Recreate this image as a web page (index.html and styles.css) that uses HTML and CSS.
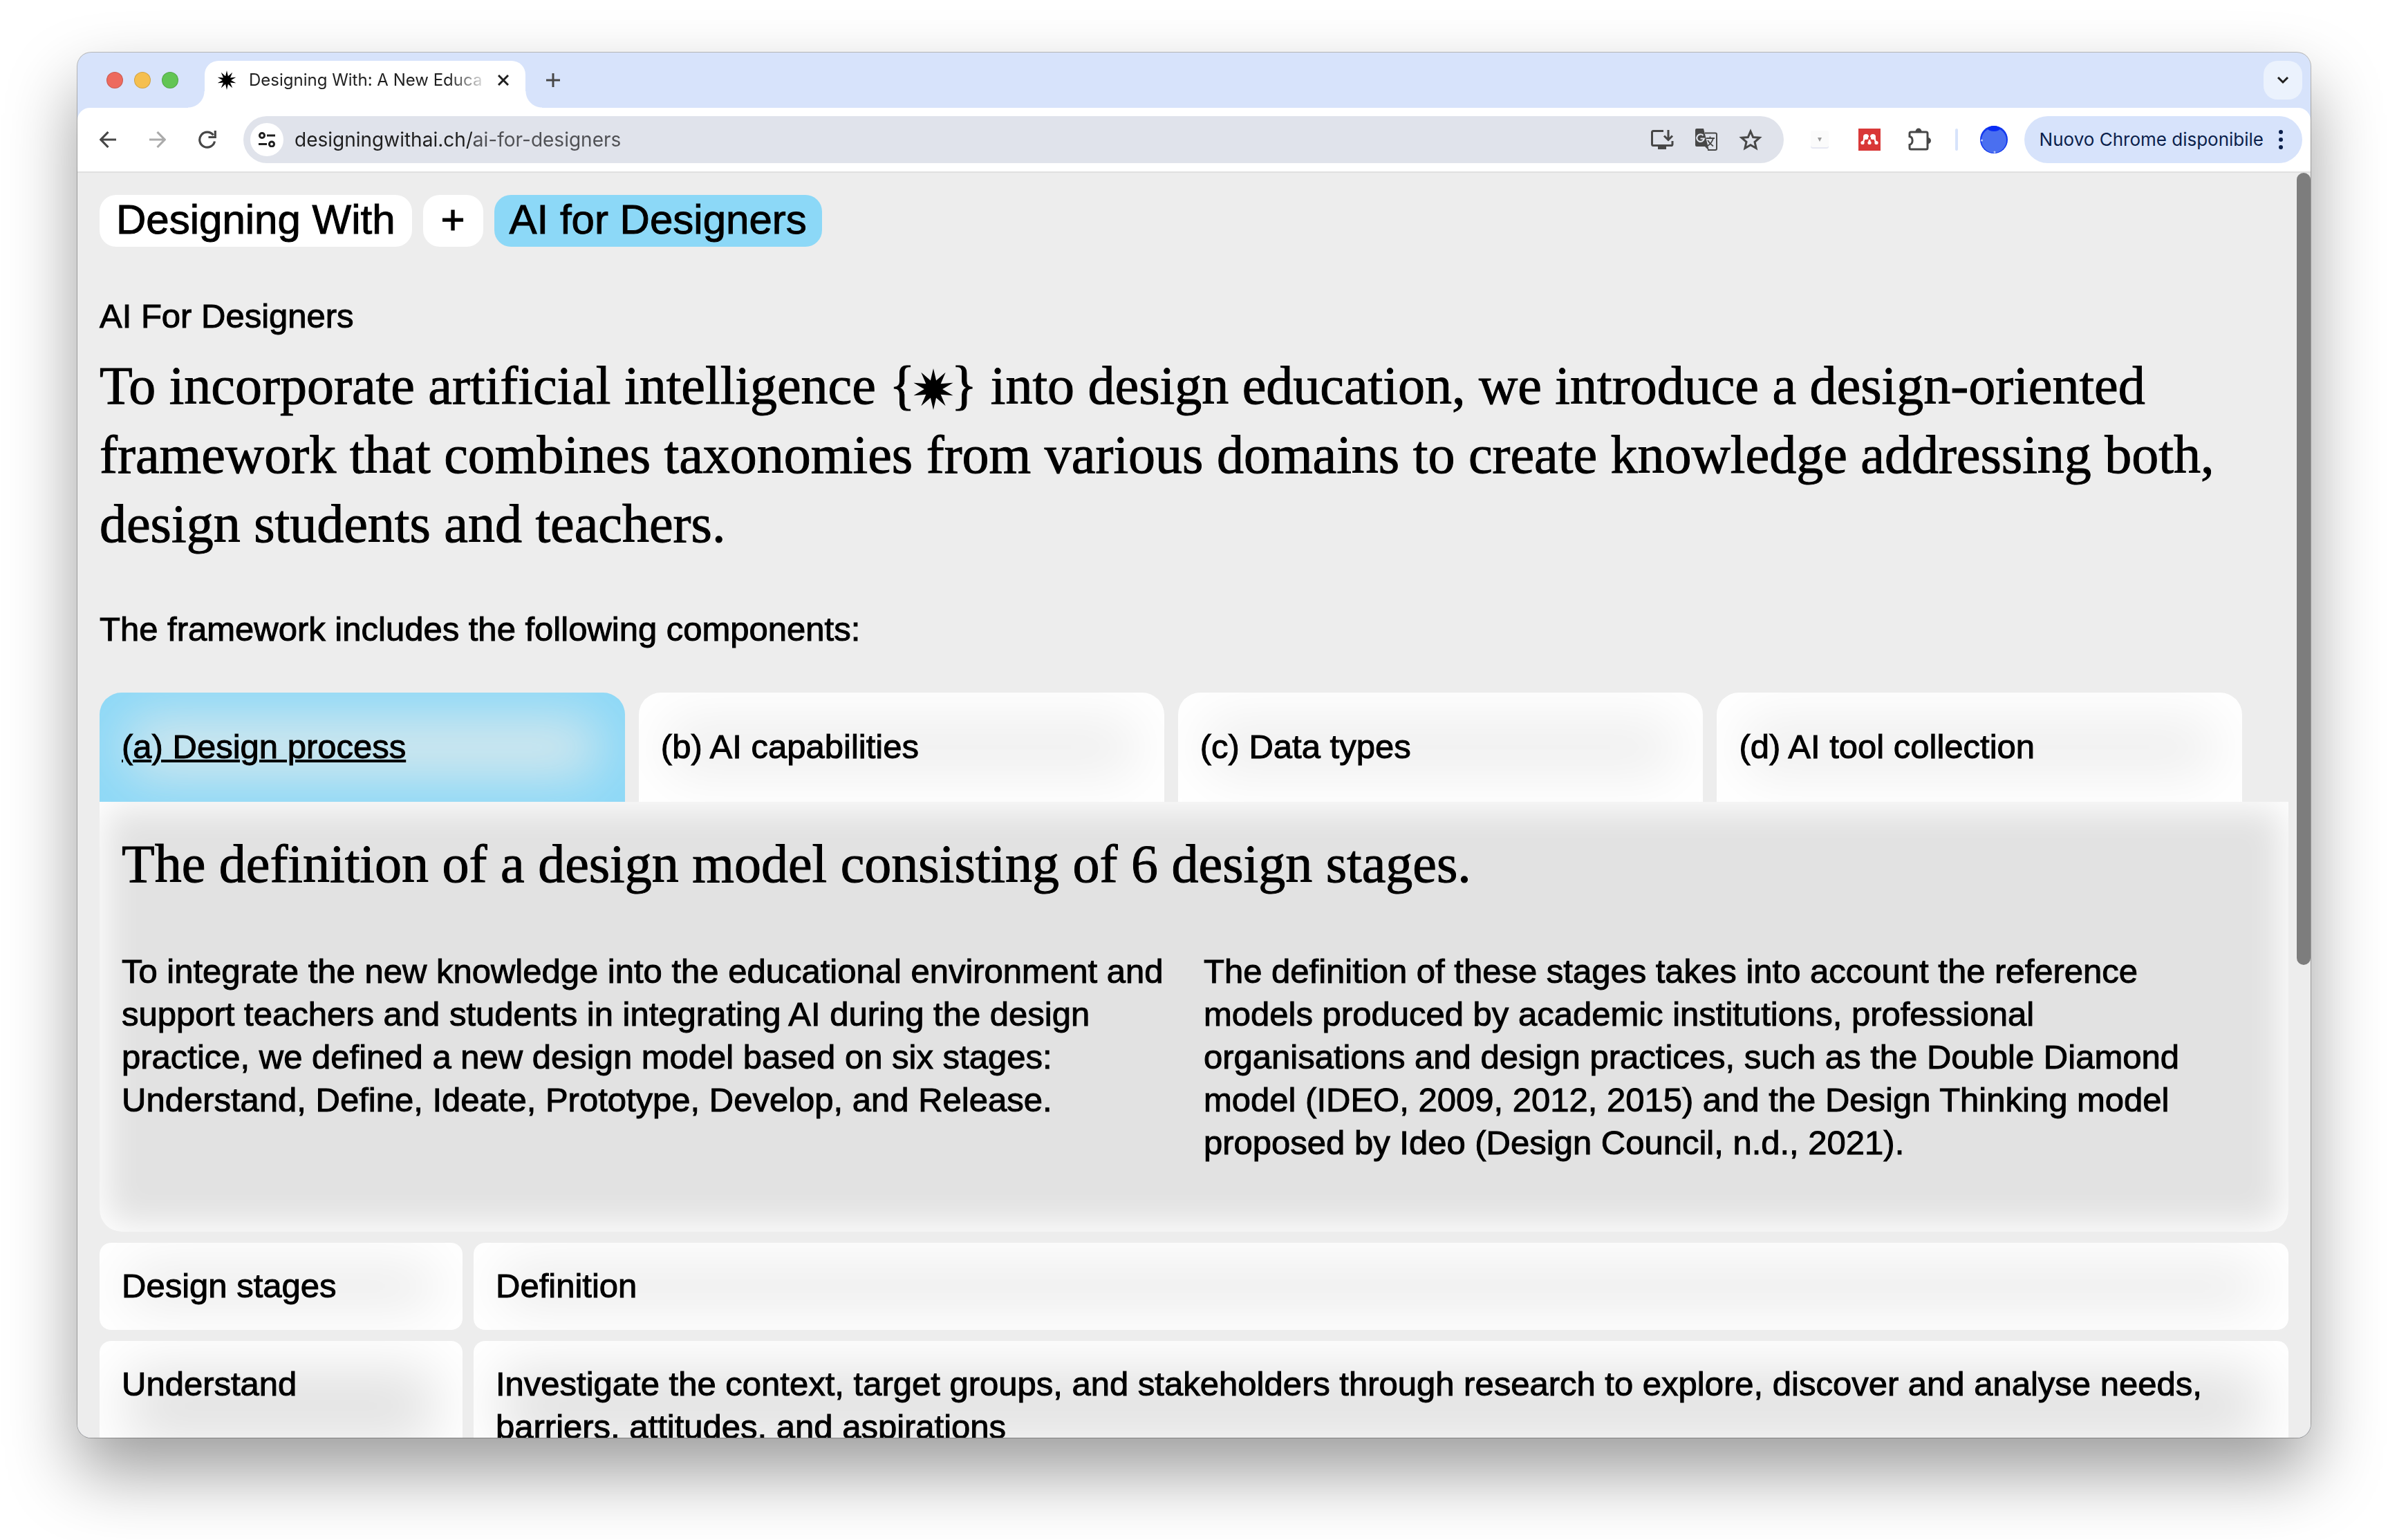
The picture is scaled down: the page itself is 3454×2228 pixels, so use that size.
FILE: index.html
```html
<!DOCTYPE html>
<html lang="en">
<head>
<meta charset="utf-8">
<title>Designing With: A New Educational Perspective</title>
<link rel="stylesheet" href="styles.css">
</head>
<body>
<svg class="defs" aria-hidden="true">
  <symbol id="star" viewBox="0 0 100 100"><polygon points="50,0 56.800,29.100 79.400,9.500 67.800,37.100 97.600,34.500 72,50 97.600,65.500 67.800,62.900 79.400,90.500 56.800,70.900 50,100 43.200,70.900 20.600,90.500 32.200,62.900 2.400,65.500 28,50 2.400,34.500 32.200,37.100 20.600,9.500 43.200,29.100"/></symbol>
</svg>
<div class="window">
  <div class="tabstrip">
    <div class="lights">
      <button class="light light-close" aria-label="Close window"></button>
      <button class="light light-min" aria-label="Minimise window"></button>
      <button class="light light-max" aria-label="Zoom window"></button>
    </div>
    <div class="browser-tab">
      <svg class="favicon"><use href="#star"/></svg>
      <span class="tab-title">Designing With: A New Educa</span>
      <button class="icon-button" aria-label="Close tab"><svg width="16" height="16" viewBox="0 0 16 16"><path d="M1 1l14 14M15 1L1 15" stroke="#1f1f1f" stroke-width="3"/></svg></button>
    </div>
    <button class="icon-button new-tab" aria-label="New tab"><svg width="20" height="20" viewBox="0 0 20 20"><path d="M10 0v20M0 10h20" stroke="#474747" stroke-width="3"/></svg></button>
    <button class="icon-button tab-search" aria-label="Search tabs"><svg width="18" height="12" viewBox="0 0 18 12"><path d="M2 2l7 7 7-7" fill="none" stroke="#1f1f1f" stroke-width="3"/></svg></button>
  </div>

  <div class="toolbar">
    <div class="nav-buttons">
      <button class="icon-button" aria-label="Back"><svg width="24" height="24" viewBox="0 0 24 24"><path d="M24 12H2M12.500 1L1.800 12l10.700 11" fill="none" stroke="#474747" stroke-width="3.200"/></svg></button>
      <button class="icon-button" aria-label="Forward"><svg width="24" height="24" viewBox="0 0 24 24"><path d="M0 12h22M11.500 1l10.700 11-10.700 11" fill="none" stroke="#ababab" stroke-width="3.200"/></svg></button>
      <button class="icon-button" aria-label="Reload"><svg width="26" height="26" viewBox="0 0 26 26"><path d="M23.500 15.500A11 11 0 1 1 21.500 6.500M24.300 0v9.500H14.500" fill="none" stroke="#474747" stroke-width="3.200"/></svg></button>
    </div>
    <div class="omnibox">
      <button class="site-info" aria-label="View site information"><svg width="24" height="22" viewBox="0 0 24 22" fill="none" stroke="#1f1f1f" stroke-width="3"><circle cx="5" cy="5" r="3.500"/><path d="M12 5h12M0 17.500h12"/><circle cx="19" cy="17.500" r="3.500"/></svg></button>
      <input class="url" type="text" aria-label="Address" value="designingwithai.ch/ai-for-designers">
      <div class="omnibox-actions">
        <button class="icon-button" aria-label="Install app"><svg width="34" height="30" viewBox="0 0 34 30"><path d="M19 2.500H4.500Q2.500 2.500 2.500 4.500V21.500Q2.500 23.500 4.500 23.500H30Q32 23.500 32 21.500V17" fill="none" stroke="#474747" stroke-width="3"/><path d="M11 23h12v6H11zM2.500 22h29.500v3H3.500z" fill="#474747"/><path d="M26 1v14M20 9.500l6 6 6-6" fill="none" stroke="#474747" stroke-width="3"/></svg></button>
        <button class="icon-button" aria-label="Translate page"><svg width="34" height="34" viewBox="0 0 34 34"><path d="M15 7.500H30Q32 7.500 32 9.500V30Q32 32 30 32H19" fill="none" stroke="#474747" stroke-width="2"/><path d="M3 1H13L21 33L15 27H3Q1 27 1 25V3Q1 1 3 1Z" fill="#474747"/><path d="M12.500 11A5.300 5.300 0 1 0 13.800 15.500H8.500" fill="none" stroke="#e0e3eb" stroke-width="2.200"/><path d="M17 15h12M22.500 12.500V15M27 15q-2 7-8 11M19 18q3 5 8 8.500" fill="none" stroke="#474747" stroke-width="1.800"/></svg></button>
        <button class="icon-button" aria-label="Bookmark this tab"><svg width="34" height="32" viewBox="0 0 34 32"><path d="M17 4l3.700 8.500 9.300.800-7 6.100 2.100 9.100L17 23.700 8.900 28.500 11 19.400 4 13.300l9.300-.800z" fill="none" stroke="#474747" stroke-width="3"/></svg></button>
      </div>
    </div>
    <div class="extensions">
      <button class="icon-button" aria-label="Extension"><svg width="28" height="28" viewBox="0 0 28 28"><rect x="1" y="2" width="26" height="25" rx="3" fill="#e6e8f3"/><rect x="1" y="1" width="26" height="24" rx="3" fill="#fbfbfb"/><path d="M11 11h6l-3 6z" fill="#999"/></svg></button>
      <button class="icon-button" aria-label="Mendeley"><svg width="32" height="32" viewBox="0 0 32 32"><path d="M0 0h32v32H0z" fill="#d93838"/><g fill="#fff"><circle cx="11" cy="12" r="4"/><circle cx="21" cy="12" r="4"/><circle cx="6" cy="20.500" r="2.600"/><circle cx="16" cy="20.500" r="2.600"/><circle cx="26" cy="20.500" r="2.600"/></g><path d="M6 20q2-1 2.500-7M26 20q-2-1-2.500-7M16 20V16M11 10l5 5 5-5" fill="none" stroke="#fff" stroke-width="2.500"/><circle cx="16" cy="14" r="2.200" fill="#d93838"/></svg></button>
      <button class="icon-button" aria-label="Extensions"><svg width="34" height="34" viewBox="0 0 34 34"><path d="M5 6H27Q29 6 29 8V29Q29 31 27 31H5Q3 31 3 29V24.500C8.500 23 8.500 13.500 3 12.500V8Q3 6 5 6Z" fill="none" stroke="#474747" stroke-width="3"/><path d="M11.500 5.500a4.500 5 0 0 1 9 0zM29.500 14a4.500 4.500 0 0 1 0 9z" fill="#474747"/></svg></button>
      <span class="divider"></span>
      <button class="icon-button" aria-label="Profile"><svg width="40" height="40" viewBox="0 0 40 40"><circle cx="20" cy="20" r="20" fill="#1238ee"/><circle cx="20" cy="21" r="18" fill="#4a6ff0"/><ellipse cx="20" cy="4" rx="9" ry="4" fill="#0a2cf5"/><circle cx="2.500" cy="21" r="1.500" fill="#b9c8ff"/><circle cx="21" cy="38" r="1.500" fill="#b9c8ff"/></svg></button>
    </div>
    <button class="update">Nuovo Chrome disponibile<svg width="6" height="28" viewBox="0 0 6 28" fill="#0b1f4b"><circle cx="3" cy="3" r="3"/><circle cx="3" cy="14" r="3"/><circle cx="3" cy="25" r="3"/></svg></button>
  </div>

  <div class="viewport">
    <main class="page">
      <nav class="crumbs">
        <a class="pill" href="#home">Designing With</a>
        <a class="pill pill-icon" href="#more">+</a>
        <a class="pill pill-active" href="#ai">AI for Designers</a>
      </nav>
      <p class="eyebrow">AI For Designers</p>
      <h1 class="headline">To incorporate artificial intelligence {<svg class="inline-star" aria-hidden="true"><use href="#star"/></svg>} into design education, we introduce a design-oriented<br>framework that combines taxonomies from various domains to create knowledge addressing both,<br>design students and teachers.</h1>
      <p class="lead">The framework includes the following components:</p>

      <nav class="tabs">
        <a class="tab tab-active" href="#a">(a) Design process</a>
        <a class="tab" href="#b">(b) AI capabilities</a>
        <a class="tab" href="#c">(c) Data types</a>
        <a class="tab" href="#d">(d) AI tool collection</a>
      </nav>
      <section class="panel">
        <h2 class="headline">The definition of a design model consisting of 6 design stages.</h2>
        <div class="columns">
          <p>To integrate the new knowledge into the educational environment and<br>support teachers and students in integrating AI during the design<br>practice, we defined a new design model based on six stages:<br>Understand, Define, Ideate, Prototype, Develop, and Release.</p>
          <p>The definition of these stages takes into account the reference<br>models produced by academic institutions, professional<br>organisations and design practices, such as the Double Diamond<br>model (IDEO, 2009, 2012, 2015) and the Design Thinking model<br>proposed by Ideo (Design Council, n.d., 2021).</p>
        </div>
      </section>
      <table class="stages">
        <thead><tr><th class="stage" scope="col">Design stages</th><th scope="col">Definition</th></tr></thead>
        <tbody><tr><th class="stage" scope="row">Understand</th><td>Investigate the context, target groups, and stakeholders through research to explore, discover and analyse needs,<br>barriers, attitudes, and aspirations</td></tr></tbody>
      </table>
    </main>
    <div class="scroll-thumb"></div>
  </div>
</div>
</body>
</html>
```

FILE: styles.css
```css
* { box-sizing: border-box; }

html, body { height: 100%; margin: 0; }

body {
  display: flex;
  padding: 76px 112px 148px;
  background: #fff;
  color: #000;
  font-family: "Liberation Sans", Arial, sans-serif;
  font-size: 49px;
  line-height: 62px;
  overflow: hidden;
}

p, h1, h2 { margin: 0; font-weight: 400; }
a { color: inherit; text-decoration: none; }
button { border: 0; padding: 0; background: none; font: inherit; color: inherit; }
svg { display: block; flex: none; }
.defs { position: absolute; width: 0; height: 0; }

.window {
  flex: 1;
  min-width: 0;
  display: flex;
  flex-direction: column;
  border-radius: 20px;
  overflow: hidden;
  background: #d7e3fb;
  box-shadow: 0 0 0 1px rgba(0, 0, 0, .25), 0 50px 100px rgba(0, 0, 0, .39);
}

/* Tab strip */
.tabstrip {
  display: flex;
  align-items: center;
  height: 80px;
  padding: 0 12px 0 42px;
  font: 24px/32px Inter, sans-serif;
}
.lights { display: flex; gap: 16px; margin-right: 38px; }
.light { width: 24px; height: 24px; border-radius: 50%; border: 1px solid rgba(0, 0, 0, .15); }
.light-close { background: #ed6a5e; }
.light-min { background: #f5bf4f; }
.light-max { background: #62c554; }
.browser-tab {
  position: relative;
  align-self: flex-end;
  display: flex;
  align-items: center;
  width: 464px;
  height: 68px;
  padding: 0 12px 12px 18px;
  border-radius: 20px 20px 0 0;
  background: #fff;
}
.browser-tab::before, .browser-tab::after {
  content: "";
  position: absolute;
  bottom: 0;
  width: 24px;
  height: 24px;
}
.browser-tab::before { right: 100%; background: radial-gradient(circle at 0 0, transparent 23px, #fff 24px); }
.browser-tab::after { left: 100%; background: radial-gradient(circle at 100% 0, transparent 23px, #fff 24px); }
.favicon { width: 28px; height: 28px; margin-right: 18px; }
.tab-title {
  flex: 1;
  min-width: 0;
  overflow: hidden;
  white-space: nowrap;
  color: #1f1f1f;
  -webkit-mask-image: linear-gradient(90deg, #000 calc(100% - 60px), transparent);
}
.icon-button {
  display: flex;
  align-items: center;
  justify-content: center;
  flex: none;
  width: 40px;
  height: 40px;
}
.new-tab { margin-left: 20px; }
.tab-search {
  width: 56px;
  height: 56px;
  margin-left: auto;
  border-radius: 20px;
  background: #ebf2fd;
}

/* Toolbar */
.toolbar {
  display: flex;
  align-items: center;
  height: 94px;
  padding: 0 12px 0 24px;
  border-bottom: 2px solid #e0e0e0;
  border-radius: 18px 18px 0 0;
  background: #fff;
  font: 28px/32px Inter, sans-serif;
}
.nav-buttons { display: flex; gap: 32px; margin-right: 32px; }
.omnibox {
  flex: 1;
  min-width: 0;
  display: flex;
  align-items: center;
  height: 68px;
  padding: 0 28px 0 10px;
  border-radius: 34px;
  background: #e0e3eb;
}
.site-info {
  display: flex;
  align-items: center;
  justify-content: center;
  flex: none;
  width: 48px;
  height: 48px;
  border-radius: 50%;
  background: #fff;
}
.url {
  flex: 1;
  min-width: 0;
  height: 40px;
  margin-left: 16px;
  padding: 0;
  border: 0;
  font: inherit;
  color: #1f1f1f;
  background: linear-gradient(90deg, #1f1f1f 260px, #4f5054 260px);
  -webkit-background-clip: text;
  -webkit-text-fill-color: transparent;
}
.omnibox-actions { display: flex; gap: 24px; }
.extensions { display: flex; align-items: center; gap: 32px; margin: 0 24px 0 32px; }
.divider { width: 4px; height: 32px; border-radius: 2px; background: #d7e3fb; }
.update {
  display: flex;
  align-items: center;
  gap: 22px;
  height: 68px;
  padding: 0 28px 0 22px;
  border-radius: 34px;
  background: #d7e3fb;
  color: #0b1f4b;
  font-size: 26px;
}

/* Page */
.viewport {
  position: relative;
  flex: 1;
  min-height: 0;
  overflow: hidden;
  background: #ededed;
}
.scroll-thumb {
  position: absolute;
  top: 0;
  right: 0;
  width: 20px;
  height: 1146px;
  border-radius: 10px;
  background: #7d7d7d;
}
.page { padding: 32px; -webkit-text-stroke: 1px #000; }
.crumbs { display: flex; gap: 16px; margin-bottom: 69px; font-size: 60px; line-height: 72px; }
.pill { padding: 0 24px 3px; border-radius: 24px; background: #fff; }
.pill-icon { padding: 0 26px 3px; }
.pill-active { padding: 0 22px 3px; background: #8cd8f7; }
.headline {
  font: 400 78px/100px "Liberation Serif", "Times New Roman", serif;
  white-space: nowrap;
}
.eyebrow { margin-bottom: 20px; }
.inline-star {
  display: inline-block;
  width: 60px;
  height: 62px;
  margin: 0 -4px;
  vertical-align: -10px;
}
.lead { margin: 71px 0 61px; }

.tabs { display: flex; gap: 20px; }
.tab {
  width: 24%;
  padding: 47px 32px 49px;
  border-radius: 32px 32px 0 0;
  background: #ededed;
  box-shadow: inset 0 0 80px 40px #fff;
}
.tab-active {
  background: #dfeaec;
  box-shadow: inset 0 0 80px 40px #8cd8f7;
  text-decoration: underline;
  text-decoration-thickness: 4px;
}
.panel {
  padding: 40px 32px 98px;
  border-radius: 0 0 32px 32px;
  background: #e2e2e2;
  box-shadow: inset 0 0 50px 10px #fff;
}
.columns {
  display: grid;
  grid-template-columns: 1fr 1fr;
  gap: 28px;
  margin-top: 74px;
  white-space: nowrap;
}

.stages {
  width: calc(100% + 32px);
  margin: 0 -16px;
  border-spacing: 16px;
  table-layout: fixed;
}
.stages th, .stages td {
  padding: 31px 32px 33px;
  border-radius: 16px;
  background: #e2e2e2;
  box-shadow: inset 0 0 80px 40px #fff;
  font-weight: 400;
  text-align: left;
  vertical-align: top;
  white-space: nowrap;
}
.stages .stage { width: 525px; }
```
